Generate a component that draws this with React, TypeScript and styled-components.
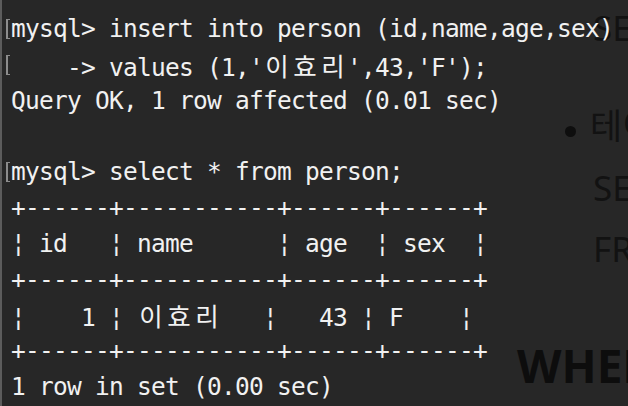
import React from "react";
import styled, { createGlobalStyle } from "styled-components";

const Global = createGlobalStyle`
  html, body {
    margin: 0;
    padding: 0;
    background: #272727;
    overflow: hidden;
  }
`;

const Page = styled.div`
  width: 628px;
  height: 406px;
  display: grid;
  overflow: hidden;
  background: #272727;
`;

/* the web page that shows through the translucent terminal */
const Article = styled.div`
  grid-area: 1 / 1;
  padding: 8px 0 0 517px;
  display: flex;
  flex-direction: column;
  white-space: nowrap;
  color: #121212;
  font-family: "Noto Sans", "Noto Sans CJK KR", sans-serif;
`;

const BgLine = styled.div<{ $top: number; $indent?: number }>`
  margin-top: ${(p) => p.$top}px;
  margin-left: ${(p) => p.$indent ?? 76}px;
  height: 40px;
  font-size: 35px;
  line-height: 40px;
  display: flex;
  align-items: center;
  gap: 14px;
`;

const Bullet = styled.span`
  width: 11px;
  height: 11px;
  border-radius: 50%;
  background: #0e0e0e;
  margin-top: 10px;
  flex: none;
`;

const Heading = styled.div<{ $top: number }>`
  margin-top: ${(p) => p.$top}px;
  font-size: 46px;
  font-weight: 700;
  line-height: 50px;
  height: 50px;
  color: #0d0d0d;
`;

const Terminal = styled.div`
  grid-area: 1 / 1;
  border-left: 2px solid #5c5c5c;
  padding-top: 11px;
  display: flex;
  flex-direction: column;
  color: #f1f1f1;
  font-family: "DejaVu Sans Mono", "Noto Sans CJK KR", monospace;
  font-size: 24.5px;
  letter-spacing: -0.75px;
  line-height: 35.8px;
`;

const Line = styled.div`
  display: flex;
  height: 35.8px;
  white-space: pre;
`;

const Gutter = styled.span`
  width: 9px;
  flex: none;
`;

const Mark = styled.span`
  display: block;
  width: 2px;
  height: 18px;
  margin: 8px 0 0 4px;
  border: 1px solid #8c8c8c;
  border-left-width: 2px;
  border-right: none;
`;

const Code = styled.span``;

const Wide = styled.span`
  display: inline-block;
  width: 28px;
  letter-spacing: 0;
  text-align: center;
  font-family: "Noto Sans CJK KR", sans-serif;
  font-size: 25.5px;
`;

const Kor = ({ text }: { text: string }) => (
  <>
    {Array.from(text).map((c, i) => (
      <Wide key={i}>{c}</Wide>
    ))}
  </>
);

const sep = "+------+-----------+------+------+";

export default function App() {
  return (
    <>
      <Global />
      <Page>
        <Article>
          <BgLine $top={0}>SELECT 컬럼명</BgLine>
          <BgLine $top={58} $indent={48}>
            <Bullet />
            테이블 전체 조회
          </BgLine>
          <BgLine $top={22}>SELECT *</BgLine>
          <BgLine $top={21}>FROM person;</BgLine>
          <Heading $top={71}>WHERE 절</Heading>
        </Article>
        <Terminal>
          <Line>
            <Gutter>
              <Mark />
            </Gutter>
            <Code>mysql&gt; insert into person (id,name,age,sex)</Code>
          </Line>
          <Line>
            <Gutter>
              <Mark />
            </Gutter>
            <Code>
              {"    -> values (1,'"}
              <Kor text="이효리" />
              {"',43,'F');"}
            </Code>
          </Line>
          <Line>
            <Gutter />
            <Code>Query OK, 1 row affected (0.01 sec)</Code>
          </Line>
          <Line>
            <Gutter />
            <Code> </Code>
          </Line>
          <Line>
            <Gutter>
              <Mark />
            </Gutter>
            <Code>mysql&gt; select * from person;</Code>
          </Line>
          <Line>
            <Gutter />
            <Code>{sep}</Code>
          </Line>
          <Line>
            <Gutter />
            <Code>¦ id   ¦ name      ¦ age  ¦ sex  ¦</Code>
          </Line>
          <Line>
            <Gutter />
            <Code>{sep}</Code>
          </Line>
          <Line>
            <Gutter />
            <Code>
              {"¦    1 ¦ "}
              <Kor text="이효리" />
              {"   ¦   43 ¦ F    ¦"}
            </Code>
          </Line>
          <Line>
            <Gutter />
            <Code>{sep}</Code>
          </Line>
          <Line>
            <Gutter />
            <Code>1 row in set (0.00 sec)</Code>
          </Line>
        </Terminal>
      </Page>
    </>
  );
}
